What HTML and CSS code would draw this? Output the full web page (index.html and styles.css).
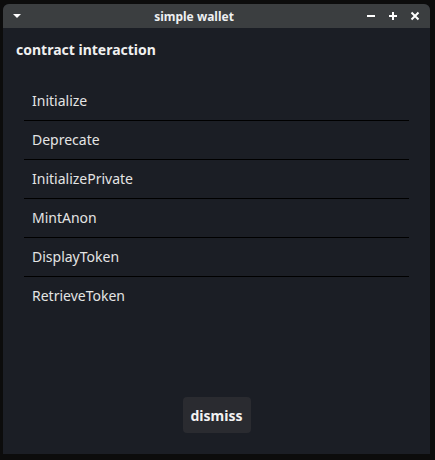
FILE: index.html
```html
<!DOCTYPE html>
<html>
<head>
<meta charset="utf-8">
<link rel="stylesheet" href="styles.css">
</head>
<body>
<div class="window">
  <div class="titlebar">
    <svg class="menu-icon" width="10" height="6" viewBox="0 0 10 6"><path d="M1 1 L9 1 L5 5 Z" fill="#fff"/></svg>
    <div class="title">simple wallet</div>
    <div class="controls">
      <svg width="10" height="10" viewBox="0 0 10 10"><path d="M1 5 H9" stroke="#fff" stroke-width="2"/></svg>
      <svg width="10" height="10" viewBox="0 0 10 10"><path d="M1 5 H9 M5 1 V9" stroke="#fff" stroke-width="2"/></svg>
      <svg width="10" height="10" viewBox="0 0 10 10"><path d="M1.5 1.5 L8.5 8.5 M8.5 1.5 L1.5 8.5" stroke="#fff" stroke-width="2"/></svg>
    </div>
  </div>
  <div class="content">
    <div class="heading">contract interaction</div>
    <ul class="list">
      <li>Initialize</li>
      <li>Deprecate</li>
      <li>InitializePrivate</li>
      <li>MintAnon</li>
      <li>DisplayToken</li>
      <li>RetrieveToken</li>
    </ul>
    <div class="footer">
      <button class="btn">dismiss</button>
    </div>
  </div>
</div>
</body>
</html>
```
FILE: styles.css
```css
html, body {
  margin: 0;
  padding: 0;
  background: #0c0c0c;
  width: 435px;
  height: 460px;
  overflow: hidden;
}
body {
  font-family: "Noto Sans", "Open Sans", sans-serif;
  color: #e8e8e8;
}
.window {
  margin: 4px 5px 0 3px;
  width: 427px;
  height: 450px;
  display: flex;
  flex-direction: column;
  background: #1b1e25;
  border-radius: 6px 6px 0 0;
  overflow: hidden;
}
.titlebar {
  height: 24px;
  background: #3b3e40;
  display: flex;
  align-items: center;
  flex-shrink: 0;
}
.menu-icon {
  margin-left: 9px;
  flex-shrink: 0;
}
.title {
  flex: 1;
  text-align: center;
  font-weight: bold;
  font-size: 12px;
  color: #eef0f2;
}
.controls {
  margin-right: 10px;
  display: flex;
  gap: 12px;
  align-items: center;
}
.controls svg { display: block; }
.content {
  flex: 1;
  display: flex;
  flex-direction: column;
}
.heading {
  padding: 12px 0 0 13px;
  font-size: 14px;
  line-height: 20px;
  font-weight: bold;
  color: #f0f0f0;
}
.list {
  list-style: none;
  margin: 22px 21px 0 21px;
  padding: 0;
}
.list li {
  height: 38px;
  line-height: 38px;
  padding-left: 8px;
  font-size: 14px;
  color: #e4e4e4;
  border-bottom: 1px solid #000;
}
.list li:last-child {
  border-bottom: none;
}
.footer {
  margin-top: auto;
  display: flex;
  justify-content: center;
  padding-bottom: 21px;
}
.btn {
  width: 68px;
  height: 36px;
  border: none;
  border-radius: 4px;
  background: #2a2b30;
  color: #f2f2f2;
  font-family: "Noto Sans", "Open Sans", sans-serif;
  font-weight: bold;
  font-size: 14px;
  padding: 0;
}
```
